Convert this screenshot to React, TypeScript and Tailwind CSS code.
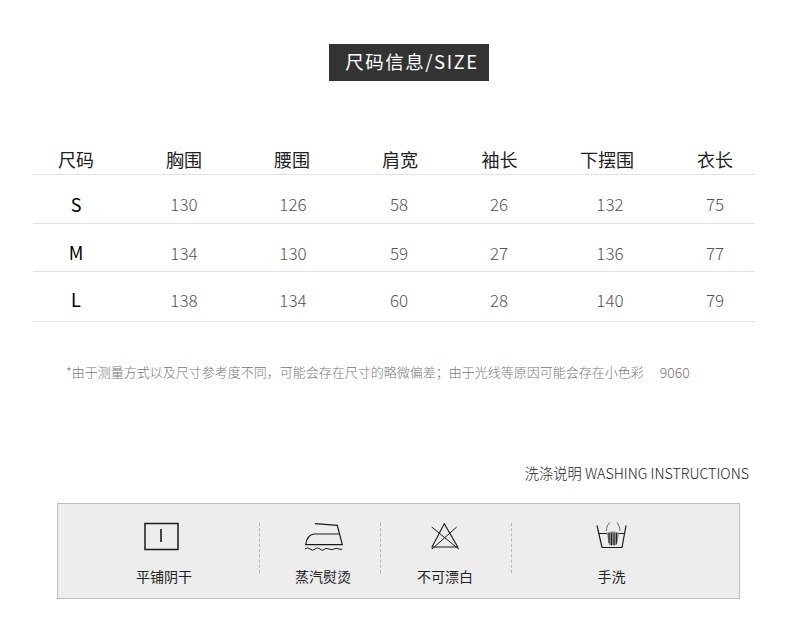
const headers = [
  { label: '尺码', offset: '' },
  { label: '胸围', offset: '' },
  { label: '腰围', offset: 'pr-[2px]' },
  { label: '肩宽', offset: 'pl-[2px]' },
  { label: '袖长', offset: 'pl-[1px]' },
  { label: '下摆围', offset: 'pr-[6px]' },
  { label: '衣长', offset: '' },
];

const rows = [
  { size: 'S', values: ['130', '126', '58', '26', '132', '75'], box: 'h-[49px] pt-[10px]' },
  { size: 'M', values: ['134', '130', '59', '27', '136', '77'], box: 'h-[48px] pt-[10px]' },
  { size: 'L', values: ['138', '134', '60', '28', '140', '79'], box: 'h-[50px] pt-[6px]' },
];

const gridCols = 'grid grid-cols-[86px_130px_88px_124px_76px_146px_64px] items-center';

function FlatDryIcon() {
  return (
    <svg width="36" height="30" viewBox="0 0 36 30" fill="none" stroke="#1a1a1a">
      <rect x="2" y="1.5" width="33" height="26" strokeWidth="1.5" />
      <path d="M18 7v13" strokeWidth="1.6" />
    </svg>
  );
}

function SteamIronIcon() {
  return (
    <svg width="60" height="32" viewBox="-1 9 60 32" fill="none" stroke="#1a1a1a" strokeWidth="1.2">
      <path d="M21 11.700 43.300 13.300 48.300 32.700H11.700C12.600 26 15 22.600 20 22H45" />
      <path d="M11 37q2.500-2.500 5 0t5 0 5 0 4 .5 5-.5 5 0 5 0 3-.5" strokeWidth="1" />
    </svg>
  );
}

function NoBleachIcon() {
  return (
    <svg width="30" height="28" viewBox="10 11 30 28" fill="none" stroke="#1a1a1a" strokeWidth="1.1">
      <path d="M24.300 11.700 12 35H37.700Z" />
      <path d="M11.700 15 39 37.300M36.700 15 11.700 37.300" strokeWidth="1" />
    </svg>
  );
}

function HandWashIcon() {
  return (
    <svg width="32" height="30" viewBox="10 9 32 30" fill="none" stroke="#1a1a1a" strokeWidth="1.2">
      <path d="M11 12.500 16 34.500H36L40 12.500" />
      <path d="M12.500 20.500H21M32 20.500H38.500" strokeWidth="1" />
      <path d="M20.500 18C20 14 22 12 23.500 9.500M31 9.500C32.500 12 34 14 34 18" stroke="#555" strokeWidth="0.9" />
      <path d="M21 20C24 18 29 18 33 20L31 32H23Z" fill="#8a8a8a" stroke="none" />
      <path d="M23 20v10M25.500 20v12.500M28 20v12.500M30.500 20v10.500" stroke="#222" strokeWidth="1" />
    </svg>
  );
}

function Divider() {
  return <div className="mt-[19px] h-[50px] border-l border-dashed border-[#b5b5b5]" />;
}

export default function App() {
  return (
    <div className="h-[629px] w-[790px] overflow-hidden bg-white font-['Noto_Sans_CJK_SC','Noto_Sans',sans-serif]">
      {/* Title */}
      <div className="ml-[329px] pt-[44px]">
        <div className="flex h-[37px] w-[160px] items-center justify-center bg-[#333333] pb-[2px] pl-[6px] text-[18.5px] tracking-[1.5px] text-white">
          尺码信息/SIZE
        </div>
      </div>

      {/* Size table */}
      <div className="ml-[33px] mt-[65px] w-[722px]">
        <div className={`${gridCols} h-[29px] border-b border-[#e3e3e3] pb-[3px] text-[18px] text-[#222222]`}>
          {headers.map((h) => (
            <div key={h.label} className={`text-center ${h.offset}`}>
              {h.label}
            </div>
          ))}
        </div>
        {rows.map((row) => (
          <div key={row.size} className={`${gridCols} ${row.box} border-b border-[#e0e0e0]`}>
            <div className="text-center text-[18px] text-black">{row.size}</div>
            {row.values.map((v, i) => (
              <div key={i} className="text-center text-[17px] font-light text-[#555555]">
                {v}
              </div>
            ))}
          </div>
        ))}
      </div>

      {/* Note */}
      <div className="ml-[66px] mt-[40px] flex h-[20px] items-center text-[13px] font-light text-[#777777]">
        <span>*由于测量方式以及尺寸参考度不同，可能会存在尺寸的略微偏差；由于光线等原因可能会存在小色彩</span>
        <span className="ml-[16px] text-[14px]">9060</span>
      </div>

      {/* Washing instructions */}
      <div className="mt-[81px] w-[749px] text-right text-[14.25px] font-light leading-[20px] text-[#222222]">
        洗涤说明 WASHING INSTRUCTIONS
      </div>

      <div className="ml-[57px] mt-[20px] flex h-[96px] w-[683px] border border-[#bdbdbd] bg-[#ededed]">
        <div className="flex w-[201px] flex-col items-center pl-[4px] pt-[17px]">
          <div className="flex h-[32px] items-center">
            <FlatDryIcon />
          </div>
          <span className="ml-[7px] mt-[13px] text-[14px] text-[#222222]">平铺阴干</span>
        </div>
        <Divider />
        <div className="flex w-[120px] flex-col items-center pl-[6px] pt-[17px]">
          <div className="flex h-[32px] items-center">
            <SteamIronIcon />
          </div>
          <span className="mt-[13px] text-[14px] text-[#222222]">蒸汽熨烫</span>
        </div>
        <Divider />
        <div className="flex w-[130px] flex-col items-center pr-[2px] pt-[17px]">
          <div className="flex h-[32px] items-center">
            <NoBleachIcon />
          </div>
          <span className="mt-[13px] text-[14px] text-[#222222]">不可漂白</span>
        </div>
        <Divider />
        <div className="flex w-[227px] flex-col items-center pr-[28px] pt-[17px]">
          <div className="flex h-[32px] items-center">
            <HandWashIcon />
          </div>
          <span className="mt-[13px] text-[14px] text-[#222222]">手洗</span>
        </div>
      </div>
    </div>
  );
}
